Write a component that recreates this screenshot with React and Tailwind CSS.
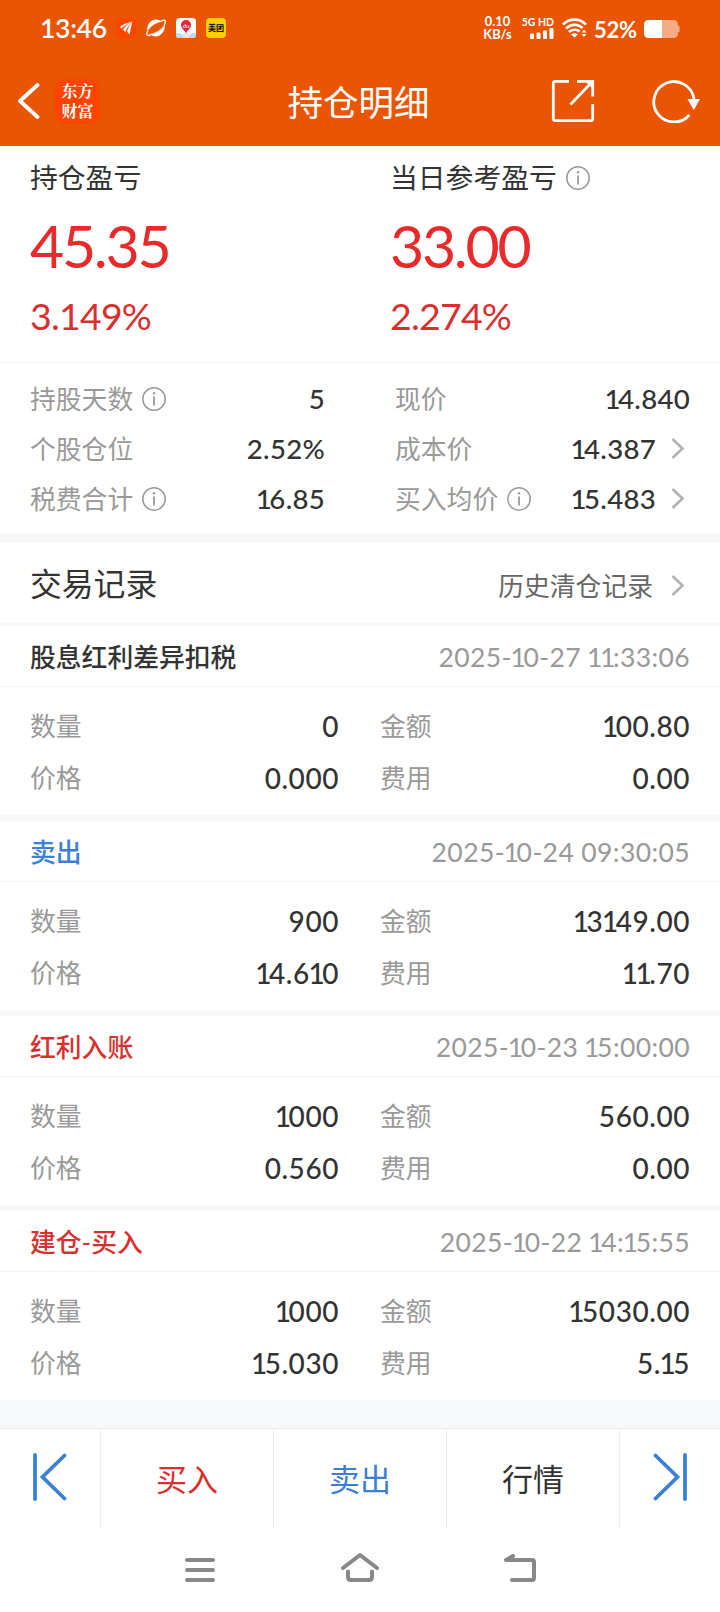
import React from "react";

const stats = [
  { label: "持股天数", info: true, value: "5" },
  { label: "现价", value: "14.840" },
  { label: "个股仓位", value: "2.52%" },
  { label: "成本价", value: "14.387", link: true },
  { label: "税费合计", info: true, value: "16.85" },
  { label: "买入均价", info: true, value: "15.483", link: true },
];

const records = [
  {
    title: "股息红利差异扣税",
    color: "text-[#333333]",
    time: "2025-10-27 11:33:06",
    rows: [["数量", "0", "金额", "100.80"], ["价格", "0.000", "费用", "0.00"]],
  },
  {
    title: "卖出",
    color: "text-[#3a80d8]",
    time: "2025-10-24 09:30:05",
    rows: [["数量", "900", "金额", "13149.00"], ["价格", "14.610", "费用", "11.70"]],
  },
  {
    title: "红利入账",
    color: "text-[#d8302f]",
    time: "2025-10-23 15:00:00",
    rows: [["数量", "1000", "金额", "560.00"], ["价格", "0.560", "费用", "0.00"]],
  },
  {
    title: "建仓-买入",
    color: "text-[#d8302f]",
    time: "2025-10-22 14:15:55",
    rows: [["数量", "1000", "金额", "15030.00"], ["价格", "15.030", "费用", "5.15"]],
  },
];

// Lato's figures are all one width, so each run of "1" is pulled in a little
const Num = ({ children, className }) => (
  <span className={className}>
    {children.split(/(1+)/).map((part, i) =>
      part.startsWith("1") ? (
        <span key={i} className="-ml-[0.05em] tracking-[-0.09em]">
          {part}
        </span>
      ) : (
        part
      )
    )}
  </span>
);

const InfoIcon = () => (
  <svg width="24" height="24" viewBox="0 0 24 24" fill="none" className="shrink-0">
    <circle cx="12" cy="12" r="11.2" stroke="#999" strokeWidth="1.5" />
    <path d="M12 9.5V18.5" stroke="#999" strokeWidth="1.8" />
    <circle cx="12" cy="6.3" r="1.2" fill="#999" />
  </svg>
);

const Chevron = () => (
  <svg width="14" height="22" viewBox="0 0 14 22" fill="none" className="shrink-0">
    <path d="M1.5 1L11.5 10.5L1.5 20" stroke="#b2b2b2" strokeWidth="2.6" />
  </svg>
);

const StatusBar = () => (
  <div className="flex h-14 items-center pl-10 text-white">
    <span className="w-[66px] text-[26.5px] leading-none font-semibold tracking-[-0.3px]">13:46</span>
    <div className="ml-[10px] flex gap-[10px]">
      <svg width="20" height="20" viewBox="0 0 20 20">
        <rect width="20" height="20" rx="4" fill="#ff4300" />
        <path d="M4 8.5C7 7 10 5 16.3 3.6C11 5.5 8 8 5.2 10.8Z" fill="#fff" />
        <path d="M7 11.5C9.5 8 12 5.5 16.3 3.6C13 7 11.5 10 9.2 14Z" fill="#fff" />
        <path d="M11 13.5C12.5 9.5 14 6.5 16.3 3.6C15.2 7.5 15 11 13.4 16.6Z" fill="#fff" />
      </svg>
      <svg width="20" height="20" viewBox="0 0 20 20" fill="none" stroke="#fff">
        <path d="M1.5 12.5C1 6 5 1.8 10 1.8C13 1.8 14.5 3 15.5 3.6C9 4.5 5 8.5 1.5 12.5Z" fill="#fff" strokeWidth="0.5" />
        <path d="M18.6 7C19 13 15 18.2 10 18.2C7 18.2 5.5 17 4.5 16.2C11 15 15.5 11.5 18.6 7Z" fill="#fff" strokeWidth="0.5" />
        <path d="M2 12.5C0.5 15 0.3 17.5 2 17.6C3 17.7 4 17 5 16.5M15 3.5C17 2 19 1.7 19.3 3C19.5 4.2 19 5.5 18.3 7" strokeWidth="1.3" />
      </svg>
      <svg width="20" height="20" viewBox="0 0 20 20">
        <rect width="20" height="20" rx="3.5" fill="#fff" />
        <path d="M0 15L5 15.5L9 20H3.5A3.5 3.5 0 0 1 0 16.5Z" fill="#b7dcf7" />
        <path d="M20 15L15 15.5L11 20H16.5A3.5 3.5 0 0 0 20 16.5Z" fill="#b7dcf7" />
        <path d="M6 17L10 14.5L14 17L11.5 20H8.5Z" fill="#d9f0c8" />
        <path d="M10 15.5C9.5 12.5 5 11 5 7A5 5 0 0 1 15 7C15 11 10.5 12.5 10 15.5Z" fill="#e0263a" />
        <text x="10" y="9.8" fontSize="6" fill="#fff" textAnchor="middle" fontFamily="Lato, sans-serif">du</text>
      </svg>
      <span className="flex h-5 w-5 items-center justify-center rounded bg-[#ffd000] text-[8px] leading-none font-bold text-black">
        美团
      </span>
    </div>
    <div className="ml-auto flex items-center pr-[39px]">
      <div className="w-[31px] text-center text-[12.8px] leading-[13px] font-bold whitespace-nowrap">
        <div>0.10</div>
        <div>KB/s</div>
      </div>
      <div className="ml-[8px] flex w-[33px] flex-col items-end">
        <span className="text-[10.5px] leading-[11px] font-bold whitespace-nowrap">5G HD</span>
        <svg width="24" height="12" viewBox="0 0 24 12" fill="#fff">
          <rect x="0" y="5.5" width="4" height="5.5" rx="1" />
          <rect x="6.5" y="4.5" width="4" height="6.5" rx="1" />
          <rect x="13" y="2.5" width="4" height="8.5" rx="1" />
          <rect x="19.5" y="0" width="4" height="11" rx="1" />
        </svg>
      </div>
      <svg width="25" height="20" viewBox="0 0 25 20" fill="none" stroke="#fff" strokeWidth="2.6" className="ml-[8px]">
        <path d="M1 6.5C7.5 0 17.5 0 24 6.5" />
        <path d="M4 10.5C9 5.5 16 5.5 20.5 10" />
        <path d="M7 14C10 11 15 11 17.5 13.5" />
        <path d="M9 16.5Q12.5 13.8 16 16.5L12.5 19.5Z" fill="#fff" stroke="none" />
        <path d="M19.5 14.5L22 11.5L24.5 14.5ZM19.5 16L22 19L24.5 16Z" fill="#fff" stroke="none" />
      </svg>
      <span className="mt-[3px] ml-[7px] w-[44px] text-[22px] leading-none font-bold tracking-[-0.3px]">52%</span>
      <svg width="37" height="18" viewBox="0 0 37 18" className="mt-[2px] ml-[6px]">
        <path d="M5 0H29C32.5 0 34 2 34 5V6H35.5V12H34V13C34 16 32.5 18 29 18H5C2 18 0 16 0 13V5C0 2 2 0 5 0Z" fill="#f7ab84" />
        <path d="M18 0V18H5C2 18 0 16 0 13V5C0 2 2 0 5 0Z" fill="#fff" />
      </svg>
    </div>
  </div>
);

const NavBar = () => (
  <div className="flex h-[90px] items-center justify-between pr-[20px] pl-[17px]">
    <div className="flex w-[158px] items-center">
      <svg width="23" height="36" viewBox="0 0 23 36" fill="none">
        <path d="M20.5 2L3 18L20.5 34" stroke="#fff" strokeWidth="3.8" strokeLinecap="round" strokeLinejoin="round" />
      </svg>
      <div className="ml-[15px] flex h-[45px] w-[45px] flex-col items-center justify-center gap-[4px] rounded-[10px] bg-[#ff4300] font-['Noto_Serif_CJK_SC','Noto_Sans_CJK_SC',serif] text-[16px] leading-none font-bold text-white">
        <span className="h-[16px]">东方</span>
        <span className="h-[16px]">财富</span>
      </div>
    </div>
    <h1 className="pt-[4px] text-[35.5px] leading-none text-white">持仓明细</h1>
    <div className="flex w-[158px] items-center justify-end">
      <svg width="44" height="44" viewBox="0 0 44 44" fill="none" stroke="#fff" strokeWidth="2.8" className="mr-[57px]">
        <path d="M18 2.3H4.5Q2.3 2.3 2.3 4.5V39.5Q2.3 41.7 4.5 41.7H39.5Q41.7 41.7 41.7 39.5V25" />
        <path d="M26 2.3H41.7V17.5M41.7 2.3L19.5 25.5" />
        <path d="M34 2H42V10Z" fill="#fff" stroke="none" />
      </svg>
      <svg width="48" height="44" viewBox="0 0 48 44" fill="none">
        <path d="M37.3 36A20.2 20.2 0 1 1 42 20" stroke="#fff" strokeWidth="2.8" />
        <path d="M35.5 20H48L41.8 31Z" fill="#fff" />
      </svg>
    </div>
  </div>
);

const Profit = ({ label, info, amount, percent }) => (
  <div className="w-[360px] shrink-0">
    <div className="flex h-[29px] items-center gap-[9px] text-[27.8px] leading-none text-[#333333]">
      <span className="pt-[1px]">{label}</span>
      {info && <InfoIcon />}
    </div>
    <div className="mt-[8px] flex h-[90px] items-center text-[59px] leading-none tracking-[-2.3px] text-[#e92a2a]">
      {amount}
    </div>
    <div className="flex h-[51px] items-center text-[37.5px] leading-none tracking-[-0.8px] text-[#d8302f]">
      <span>{percent}</span>
    </div>
  </div>
);

const Record = ({ record }) => (
  <div className="h-[189px] bg-white">
    <div className="flex h-[61px] items-center justify-between border-b border-[#f3f3f4] px-[30px] pt-[2px]">
      <span className={`pt-[1px] text-[25.8px] leading-none font-medium ${record.color}`}>{record.title}</span>
      <Num className="text-[26.5px] leading-none tracking-[0.015em] text-[#999999]">{record.time}</Num>
    </div>
    <div className="px-[30px] pt-[13px]">
      {record.rows.map(([l1, v1, l2, v2]) => (
        <div key={l1} className="flex h-[52px] items-center text-[25.8px] leading-none">
          <span className="pt-[2px] text-[#999999]">{l1}</span>
          <Num className="mr-[41px] ml-auto text-[28px] font-medium tracking-[0.02em] text-[#333333]">{v1}</Num>
          <div className="flex w-[310px] items-center justify-between">
            <span className="pt-[2px] text-[#999999]">{l2}</span>
            <Num className="text-[28px] font-medium tracking-[0.02em] text-[#333333]">{v2}</Num>
          </div>
        </div>
      ))}
    </div>
  </div>
);

const App = () => {
  return (
    <div className="flex h-[1612px] w-[720px] flex-col overflow-hidden bg-white font-['Lato','Noto_Sans_CJK_SC',sans-serif]">
      <header className="h-[146px] bg-[#ea5504]">
        <StatusBar />
        <NavBar />
      </header>

      <section className="flex h-[217px] border-b border-[#f3f3f4] pt-[17px] pl-[30px]">
        <Profit label="持仓盈亏" amount="45.35" percent="3.149%" />
        <Profit label="当日参考盈亏" info amount="33.00" percent="2.274%" />
      </section>

      <section className="grid h-[170px] auto-rows-[50px] grid-cols-[295px_295px] gap-x-[70px] px-[30px] pt-[11px]">
        {stats.map((s) => (
          <div key={s.label} className="flex items-center text-[25.8px] leading-none">
            <span className="mr-[9px] pt-[2px] text-[#999999]">{s.label}</span>
            {s.info && <InfoIcon />}
            <Num className="ml-auto text-[27.6px] font-medium tracking-[0.01em] text-[#333333]">{s.value}</Num>
            {s.link && (
              <span className="mr-[5px] ml-[15px]">
                <Chevron />
              </span>
            )}
          </div>
        ))}
      </section>

      <div className="h-[10px] bg-[#f6f8fa]" />
      <section className="flex h-[80px] items-center px-[30px] pt-[5px]">
        <h2 className="pb-[1px] text-[31.8px] leading-none text-[#333333]">交易记录</h2>
        <span className="mr-[18px] ml-auto pt-[3px] text-[25.8px] leading-none text-[#666666]">历史清仓记录</span>
        <span className="mr-[5px]">
          <Chevron />
        </span>
      </section>

      <div className="flex h-[805px] flex-col gap-[6px] bg-[#f6f8fa] pt-[3px]">
        {records.map((r) => (
          <Record key={r.time} record={r} />
        ))}
      </div>

      {/* Barra de operaciones */}
      <div className="flex h-[100px] divide-x divide-[#ececec] border-t border-[#ececec] text-[31px] leading-none">
        <button className="flex w-[101px] items-center justify-center pb-[3px]">
          <svg width="34" height="48" viewBox="0 0 34 48" fill="none" stroke="#3a80d8" strokeWidth="3.8" strokeLinecap="round">
            <path d="M2 2V46M31.5 2.5L9.5 24L31.5 45.5" />
          </svg>
        </button>
        <button className="w-[173px] pt-[2px] text-[#d8302f]">买入</button>
        <button className="w-[173px] pt-[2px] text-[#3a80d8]">卖出</button>
        <button className="w-[173px] pt-[2px] text-[#333333]">行情</button>
        <button className="flex w-[100px] items-center justify-center pb-[3px]">
          <svg width="34" height="48" viewBox="0 0 34 48" fill="none" stroke="#3a80d8" strokeWidth="3.8" strokeLinecap="round">
            <path d="M32 2V46M2.5 2.5L24.5 24L2.5 45.5" />
          </svg>
        </button>
      </div>

      <nav className="flex h-[84px] items-center justify-center gap-[124px]">
        <svg width="36" height="36" viewBox="0 0 36 36" fill="none" stroke="#888" strokeWidth="4" strokeLinecap="round">
          <path d="M7 8H33M7 18H33M7 28H33" />
        </svg>
        <svg width="40" height="36" viewBox="0 0 40 36" fill="none" stroke="#888" strokeWidth="4" strokeLinecap="round" strokeLinejoin="round">
          <path d="M3 16L20 3L37 16M8 19.5V25Q8 28 11 28H29Q32 28 32 25V19.5" />
        </svg>
        <svg width="36" height="36" viewBox="0 0 36 36" fill="none" stroke="#888" strokeWidth="4" strokeLinecap="round" strokeLinejoin="round">
          <path d="M9 4L2 8H28Q30 8 30 10V26Q30 28 28 28H8" />
        </svg>
      </nav>
    </div>
  );
};

export default App;
